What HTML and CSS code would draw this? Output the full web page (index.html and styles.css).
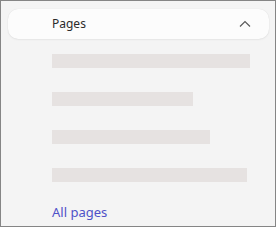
FILE: index.html
```html
<!DOCTYPE html>
<html>
<head>
<meta charset="utf-8">
<link rel="stylesheet" href="styles.css">
</head>
<body>
<div class="frame">
  <div class="header">
    <span class="title">Pages</span>
    <svg class="chev" width="12" height="8" viewBox="0 0 12 8"><path d="M1 6.5 L6 1.5 L11 6.5" fill="none" stroke="#5a5a5a" stroke-width="1.2"/></svg>
  </div>
  <div class="list">
    <div class="bar" style="width:198px"></div>
    <div class="bar" style="width:141px"></div>
    <div class="bar" style="width:158px"></div>
    <div class="bar" style="width:195px"></div>
  </div>
  <a class="all" href="#">All pages</a>
</div>
</body>
</html>
```

FILE: styles.css
```css
html, body { margin: 0; padding: 0; }
body { width: 276px; height: 227px; overflow: hidden; font-family: "Noto Sans", "Open Sans", sans-serif; }
.frame {
  box-sizing: border-box;
  width: 276px; height: 227px;
  border: 1px solid #858585;
  background: #f4f4f4;
  padding: 8px 6px 0 7px;
}
.header {
  height: 30px;
  box-sizing: border-box;
  background: #fcfcfc;
  border-radius: 10px;
  box-shadow: 0 0 1px rgba(0,0,0,0.12), 0 1px 2px rgba(0,0,0,0.05);
  display: flex;
  align-items: center;
  padding: 0 18px 0 44px;
}
.title { flex: 1; font-size: 12px; color: #2b2b2b; line-height: 16px; }
.chev { display: block; }
.list {
  display: flex; flex-direction: column; gap: 24px;
  padding: 15px 0 0 44px;
}
.bar { height: 14px; background: #e6e2e1; }
.all {
  display: block;
  margin: 21px 0 0 44px;
  font-size: 13px; line-height: 18px;
  color: #4f52c8;
  text-decoration: none;
}
```
